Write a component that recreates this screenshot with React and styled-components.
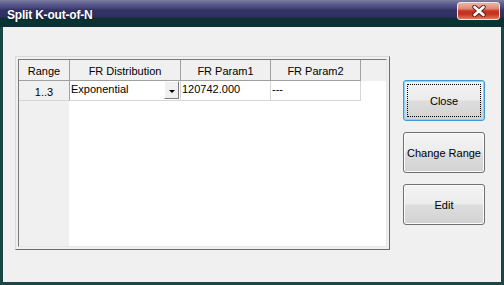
import styled, { createGlobalStyle } from "styled-components";

const GlobalStyle = createGlobalStyle`
  html, body {
    margin: 0;
    padding: 0;
    overflow: hidden;
  }
  body {
    font-family: "Liberation Sans", Arial, sans-serif;
    font-size: 11px;
    color: #000;
  }
`;

const Window = styled.div`
  width: 504px;
  height: 285px;
  background: #1c4646;
  display: flex;
  flex-direction: column;
  box-sizing: border-box;
`;

const TitleBar = styled.div`
  height: 27px;
  flex: none;
  display: flex;
  align-items: flex-start;
  padding-left: 7px;
  padding-right: 4px;
  background: linear-gradient(
    to bottom,
    #808099 0px,
    #6a6c98 2px,
    #55578c 5px,
    #45457a 8px,
    #333366 10px,
    #2f2f60 17px,
    #0c3232 18px,
    #0a3030 27px
  );
`;

const Title = styled.span`
  color: #fff;
  font-weight: bold;
  font-size: 12px;
  margin-top: 8px;
  letter-spacing: -0.2px;
  text-shadow: 0 0 2px rgba(0, 0, 0, 0.6);
`;

const CaptionClose = styled.div`
  margin-left: auto;
  margin-top: 2px;
  width: 43px;
  height: 18px;
  box-sizing: border-box;
  border: 1px solid #e8e8e8;
  border-radius: 3px;
  display: flex;
  align-items: center;
  justify-content: center;
  background: linear-gradient(
    to bottom,
    #eeb2a4 0%,
    #e08a78 35%,
    #c8341f 50%,
    #c23420 70%,
    #e27a55 100%
  );
`;

const Client = styled.div`
  flex: 1;
  margin: 0 3px 3px 3px;
  background: #f0f0f0;
  display: flex;
  align-items: flex-start;
  padding: 29px 0 0 12px;
`;

const GridFrame = styled.div`
  width: 375px;
  height: 194px;
  box-sizing: border-box;
  border: 1px solid;
  border-color: #dadada #6b6b6b #6b6b6b #dadada;
  padding: 2px;
  background: #f0f0f0;
  display: flex;
`;

const GridInner = styled.div`
  flex: 1;
  box-sizing: border-box;
  border: 1px solid;
  border-color: #7a7a7a #e6e6e6 #e6e6e6 #7a7a7a;
  background: #fff;
  display: flex;
  flex-direction: column;
  overflow: hidden;
`;

const Table = styled.div`
  display: grid;
  grid-template-columns: 51px 111px 90px 90px 1fr;
  grid-template-rows: 21px 20px;
`;

const HeadCell = styled.div`
  background: #f0f0f0;
  box-sizing: border-box;
  border-right: ${(p) => (p.$last ? "none" : "1px solid #a0a0a0")};
  border-bottom: ${(p) => (p.$last ? "none" : "1px solid #a0a0a0")};
  display: flex;
  align-items: center;
  justify-content: center;
  padding-top: 1px;
`;

const FixedCell = styled.div`
  background: #f0f0f0;
  box-sizing: border-box;
  border-right: 1px solid #a0a0a0;
  border-bottom: 1px solid #d6d6d6;
  display: flex;
  align-items: center;
  justify-content: center;
  padding-top: 2px;
`;

const DataCell = styled.div`
  background: #fff;
  box-sizing: border-box;
  border-right: ${(p) => (p.$last ? "none" : "1px solid #d6d6d6")};
  border-bottom: ${(p) => (p.$last ? "none" : "1px solid #d6d6d6")};
  display: flex;
  align-items: flex-start;
  padding: 2px 0 0 1px;
  line-height: 13px;
  position: relative;
`;

const FixedColumnFill = styled.div`
  flex: 1;
  width: 50px;
  background: #f0f0f0;
`;

const DropButton = styled.div`
  position: absolute;
  right: 1px;
  top: 0;
  width: 15px;
  height: 18px;
  box-sizing: border-box;
  background: #f0f0f0;
  border: 1px solid;
  border-color: #ffffff #7a7a7a #7a7a7a #ffffff;
  display: flex;
  align-items: center;
  justify-content: center;
  padding-top: 2px;
`;

const Arrow = styled.div`
  width: 0;
  height: 0;
  border-left: 3px solid transparent;
  border-right: 3px solid transparent;
  border-top: 3px solid #000;
`;

const ButtonColumn = styled.div`
  margin-left: 13px;
  margin-top: 24px;
  display: flex;
  flex-direction: column;
  gap: 11px;
`;

const Button = styled.button`
  width: 82px;
  height: 41px;
  box-sizing: border-box;
  font-family: "Liberation Sans", Arial, sans-serif;
  font-size: 11px;
  color: #000;
  border: 1px solid ${(p) => (p.$default ? "#3c9ad6" : "#707070")};
  border-radius: 3px;
  box-shadow: ${(p) =>
    p.$default ? "inset 0 0 0 1px #8fd0f4" : "inset 0 0 0 1px #fbfbfb"};
  background: linear-gradient(
    to bottom,
    #f4f4f4 0%,
    #ececec 48%,
    #dddddd 52%,
    #d2d2d2 100%
  );
  position: relative;
  padding: 0;
  display: flex;
  align-items: center;
  justify-content: center;
`;

const FocusRing = styled.span`
  position: absolute;
  inset: 3px;
  border: 1px dotted #000;
`;

const headers = ["Range", "FR Distribution", "FR Param1", "FR Param2"];

export default function App() {
  return (
    <Window>
      <GlobalStyle />
      <TitleBar>
        <Title>Split K-out-of-N</Title>
        <CaptionClose>
          <svg width="16" height="12" viewBox="0 0 16 12">
            <path
              d="M3.5 2 L12.5 10 M12.5 2 L3.5 10"
              stroke="#5a2018"
              strokeWidth="4.4"
              strokeLinecap="round"
            />
            <path
              d="M3.5 2 L12.5 10 M12.5 2 L3.5 10"
              stroke="#ffffff"
              strokeWidth="2.6"
              strokeLinecap="round"
            />
          </svg>
        </CaptionClose>
      </TitleBar>
      <Client>
        <GridFrame>
          <GridInner>
            <Table>
              {headers.map((h) => (
                <HeadCell key={h}>{h}</HeadCell>
              ))}
              <HeadCell $last />
              <FixedCell>1..3</FixedCell>
              <DataCell>
                Exponential
                <DropButton>
                  <Arrow />
                </DropButton>
              </DataCell>
              <DataCell>120742.000</DataCell>
              <DataCell>---</DataCell>
              <DataCell $last />
            </Table>
            <FixedColumnFill />
          </GridInner>
        </GridFrame>
        <ButtonColumn>
          <Button $default>
            <FocusRing />
            Close
          </Button>
          <Button>Change Range</Button>
          <Button>Edit</Button>
        </ButtonColumn>
      </Client>
    </Window>
  );
}
